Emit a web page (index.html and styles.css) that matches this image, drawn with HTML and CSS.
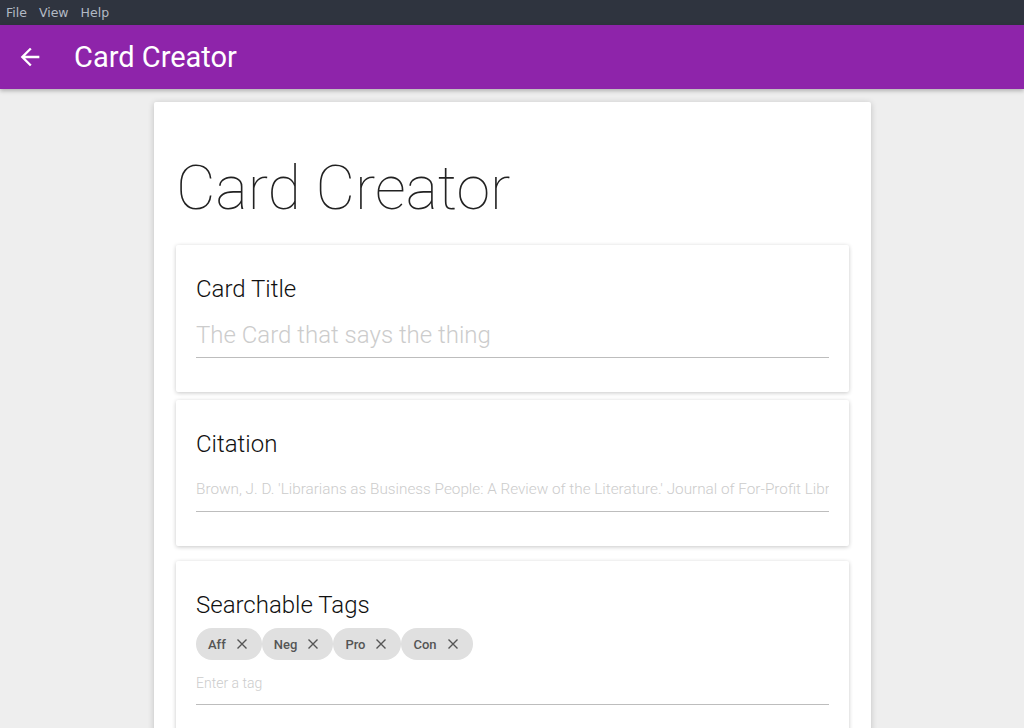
FILE: index.html
```html
<!DOCTYPE html>
<html>
<head>
<meta charset="utf-8">
<link rel="stylesheet" href="styles.css">
</head>
<body>
<div class="menubar">
  <span class="menu-item">File</span>
  <span class="menu-item">View</span>
  <span class="menu-item">Help</span>
</div>
<header class="appbar">
  <svg class="back" width="28" height="28" viewBox="0 0 24 24"><path fill="#fff" d="M20 11H7.83l5.59-5.59L12 4l-8 8 8 8 1.41-1.41L7.83 13H20v-2z"/></svg>
  <h1 class="appbar-title">Card Creator</h1>
</header>
<main class="content">
  <section class="paper">
    <h2 class="display">Card Creator</h2>
    <div class="card card-title">
      <div class="label">Card Title</div>
      <div class="field field-large"><span class="placeholder">The Card that says the thing</span></div>
    </div>
    <div class="card card-citation">
      <div class="label">Citation</div>
      <div class="field field-small"><span class="placeholder">Brown, J. D. 'Librarians as Business People: A Review of the Literature.' Journal of For-Profit Libr</span></div>
    </div>
    <div class="card card-tags">
      <div class="label">Searchable Tags</div>
      <div class="chips">
        <span class="chip">Aff <svg class="x" width="12" height="12" viewBox="0 0 12 12"><path d="M1.5 1.5l9 9M10.5 1.5l-9 9" stroke="#555" stroke-width="1.4"/></svg></span>
        <span class="chip">Neg <svg class="x" width="12" height="12" viewBox="0 0 12 12"><path d="M1.5 1.5l9 9M10.5 1.5l-9 9" stroke="#555" stroke-width="1.4"/></svg></span>
        <span class="chip">Pro <svg class="x" width="12" height="12" viewBox="0 0 12 12"><path d="M1.5 1.5l9 9M10.5 1.5l-9 9" stroke="#555" stroke-width="1.4"/></svg></span>
        <span class="chip">Con <svg class="x" width="12" height="12" viewBox="0 0 12 12"><path d="M1.5 1.5l9 9M10.5 1.5l-9 9" stroke="#555" stroke-width="1.4"/></svg></span>
      </div>
      <div class="field field-tag"><span class="placeholder">Enter a tag</span></div>
    </div>
  </section>
</main>
</body>
</html>
```
FILE: styles.css
```css
* { box-sizing: border-box; }
html, body { margin: 0; padding: 0; }
body {
  background: #eeeeee;
  font-family: Roboto, "Liberation Sans", sans-serif;
  height: 728px;
  overflow: hidden;
}
.menubar {
  height: 25px;
  background: #2f343f;
  display: flex;
  align-items: center;
  padding-left: 6px;
  gap: 12px;
}
.menu-item {
  color: #b3bac5;
  font-family: "DejaVu Sans", "Liberation Sans", sans-serif;
  font-size: 12.5px;
}
.appbar {
  height: 64px;
  background: #8e24aa;
  display: flex;
  align-items: center;
  padding-left: 16px;
  box-shadow: 0 2px 4px rgba(0,0,0,0.25);
  position: relative;
  z-index: 1;
}
.back { display: block; margin-right: 30px; }
.appbar-title {
  margin: 0;
  color: #fff;
  font-weight: 400;
  font-size: 29px;
}
.content {
  display: flex;
  justify-content: center;
  padding-top: 13px;
}
.paper {
  width: 717px;
  background: #fff;
  border-radius: 2px;
  box-shadow: 0 1px 6px rgba(0,0,0,0.2);
  padding: 46px 22px 40px 22px;
  margin-left: 1px;
}
.display {
  margin: 0 0 17px 0;
  font-weight: 100;
  font-size: 61px;
  line-height: 80px;
  color: #222;
}
.card {
  background: #fff;
  border-radius: 2px;
  box-shadow: 0 1px 4px rgba(0,0,0,0.22);
  padding: 28px 20px 35px 20px;
}
.card-title { height: 147px; margin-bottom: 8px; }
.card-citation { height: 146px; margin-bottom: 15px; }
.label {
  font-size: 24px;
  font-weight: 300;
  color: #111;
  line-height: 32px;
}
.field {
  border-bottom: 1px solid #bdbdbd;
  overflow: hidden;
  white-space: nowrap;
}
.placeholder { color: #cccccc; }
.field-large {
  font-size: 24px;
  font-weight: 300;
  margin-top: 14px;
  height: 39px;
  line-height: 32px;
}
.field-small {
  font-size: 15.3px;
  font-weight: 300;
  margin-top: 16px;
  height: 36px;
  line-height: 26px;
}
.chips {
  display: flex;
  margin-top: 7px;
}
.chip {
  display: inline-flex;
  align-items: center;
  height: 32px;
  border-radius: 16px;
  background: #e0e0e0;
  color: #555;
  font-size: 13px;
  font-weight: 500;
  padding: 0 14px 0 12px;
  gap: 10px;
}
.chip .x { display: block; }
.field-tag {
  font-size: 14px;
  font-weight: 300;
  margin-top: 13px;
  height: 32px;
  line-height: 20px;
}
```
